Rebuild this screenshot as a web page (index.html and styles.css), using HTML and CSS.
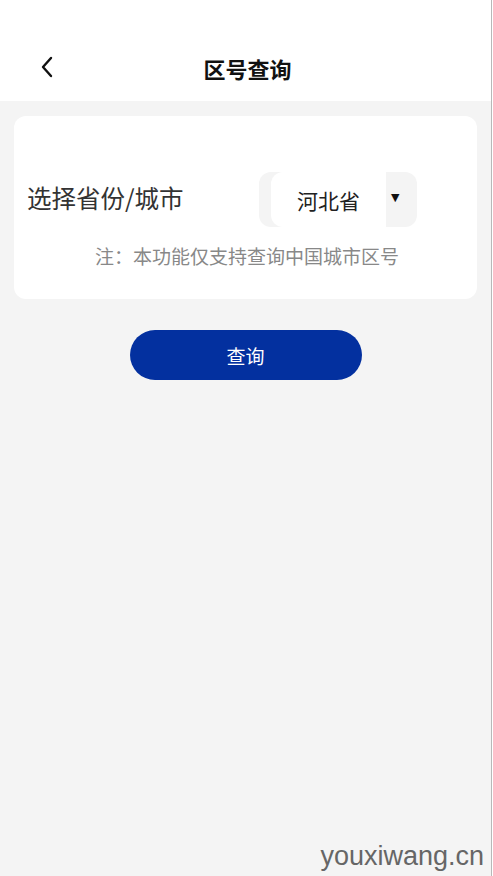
FILE: index.html
```html
<!DOCTYPE html>
<html lang="zh-CN">
<head>
  <meta charset="UTF-8">
  <meta name="viewport" content="width=device-width, initial-scale=1.0">
  <title>区号查询</title>
  <link rel="stylesheet" href="styles.css">
</head>
<body>
  <div class="page">
    <div class="header">
      <span class="back">
        <svg width="14" height="22" viewBox="0 0 14 22">
          <path d="M11 2 L3 11 L11 20" fill="none" stroke="#111" stroke-width="2.4" stroke-linecap="round" stroke-linejoin="round"/>
        </svg>
      </span>
      <h1>区号查询</h1>
    </div>

    <div class="content">
      <div class="card">
        <div class="row">
          <span class="label">选择省份/城市</span>
          <div class="select">
            <span class="select-value">河北省</span>
            <span class="arrow">▼</span>
          </div>
        </div>
        <p class="note">注：本功能仅支持查询中国城市区号</p>
      </div>

      <button class="query-btn" type="button">查询</button>
    </div>

    <div class="watermark">youxiwang.cn</div>
  </div>
</body>
</html>
```

FILE: styles.css
```css
* {
  margin: 0;
  padding: 0;
  box-sizing: border-box;
}

html, body {
  height: 100%;
}

body {
  font-family: "Noto Sans CJK SC", "Noto Sans", sans-serif;
  background-color: #ffffff;
}

.page {
  width: 492px;
  height: 876px;
  background-color: #f4f4f4;
  border-right: 1px solid #b8b8b8;
  display: flex;
  flex-direction: column;
  position: relative;
}

.header {
  height: 101px;
  background-color: #ffffff;
  display: flex;
  align-items: center;
  justify-content: center;
  padding-top: 34px;
  padding-left: 4px;
  position: relative;
}

.header h1 {
  font-size: 22px;
  font-weight: bold;
  color: #111;
}

.back {
  position: absolute;
  left: 40px;
  top: 56px;
  display: flex;
}

.content {
  padding: 15px 14px 0 14px;
  display: flex;
  flex-direction: column;
  align-items: center;
}

.card {
  width: 100%;
  height: 183px;
  background-color: #ffffff;
  border-radius: 12px;
  padding: 56px 13px 0 13px;
}

.row {
  display: flex;
  align-items: center;
}

.label {
  width: 232px;
  font-size: 24.5px;
  color: #333;
  margin-top: -4px;
}

.select {
  width: 158px;
  height: 55px;
  background-color: #f4f4f4;
  border-radius: 12px;
  display: flex;
  align-items: center;
  padding-left: 12px;
}

.select-value {
  width: 115px;
  height: 55px;
  background-color: #ffffff;
  border-radius: 12px 0 0 12px;
  display: flex;
  align-items: center;
  justify-content: center;
  font-size: 21px;
  color: #222;
}

.arrow {
  font-size: 11px;
  margin-left: 5px;
  margin-top: -4px;
  color: #111;
  font-family: "DejaVu Sans", sans-serif;
}

.note {
  margin-top: 15px;
  text-align: center;
  font-size: 19px;
  color: #888;
  padding-left: 3px;
}

.query-btn {
  margin-top: 31px;
  width: 232px;
  height: 50px;
  border: none;
  border-radius: 25px;
  background-color: #03309f;
  color: #ffffff;
  font-family: "Noto Sans CJK SC", sans-serif;
  font-size: 19px;
}

.watermark {
  position: absolute;
  right: 7px;
  bottom: 4px;
  font-family: "Liberation Sans", Arial, sans-serif;
  font-size: 27px;
  color: #666;
}
```
